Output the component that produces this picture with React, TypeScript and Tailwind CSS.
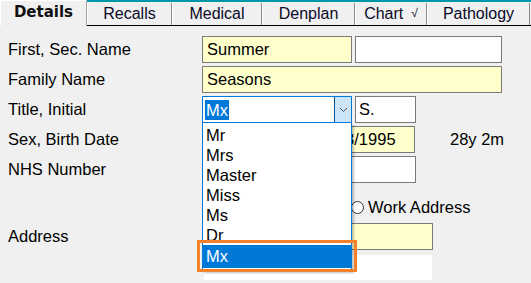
import React from "react";

const tabs = [
  { label: "Recalls", w: "w-[85px]" },
  { label: "Medical", w: "w-[90px]" },
  { label: "Denplan", w: "w-[93px]" },
  { label: "Chart", w: "w-[72px]", tick: true },
  { label: "Pathology", w: "w-[103px]" },
];

const titles = ["Mr", "Mrs", "Master", "Miss", "Ms", "Dr", "Mx"];

const Label = ({ children }: { children: string }) => (
  <div className="w-[202px] shrink-0 pl-2 text-[16.5px] text-black">{children}</div>
);

export default function App() {
  return (
    <div
      className="relative w-[531px] h-[283px] overflow-hidden bg-[#f0f0f0] text-black"
      style={{ fontFamily: '"Liberation Sans", Arial, sans-serif' }}
    >
      {/* Tabs */}
      <div className="flex h-[26px]">
        <div
          className="w-[87px] flex items-center justify-center border-t border-l border-white border-r border-r-[#a0a0a0] pb-[2px] text-[15px] font-bold text-[#111]"
          style={{ fontFamily: '"DejaVu Sans", sans-serif' }}
        >
          Details
        </div>
        <div className="flex-1 flex border-t-2 border-[#0097a7] border-b border-b-black">
          {tabs.map((t) => (
            <div
              key={t.label}
              className={`${t.w} shrink-0 flex items-center justify-center border-l border-white border-r border-r-[#8a8a8a] mt-[1px] text-[16px] text-[#0a0a28]`}
            >
              {t.label}
              {t.tick && <span className="ml-[8px] text-[12px] -mt-[2px]">√</span>}
            </div>
          ))}
        </div>
      </div>

      {/* Form */}
      <div className="flex flex-col gap-[3px] pt-[10px]">
        <div className="flex items-center h-[27px]">
          <Label>First, Sec. Name</Label>
          <div className="w-[150px] h-[27px] border border-[#7a7a7a] bg-[#ffffcc] px-[4px] flex items-center text-[16.5px]">Summer</div>
          <div className="w-[147px] h-[27px] ml-[3px] border border-[#7a7a7a] bg-white" />
        </div>

        <div className="flex items-center h-[27px]">
          <Label>Family Name</Label>
          <div className="w-[300px] h-[27px] border border-[#7a7a7a] bg-[#ffffcc] px-[4px] flex items-center text-[16.5px]">Seasons</div>
        </div>

        <div className="flex items-center h-[27px]">
          <Label>Title, Initial</Label>
          <div className="relative z-10 w-[150px] h-[27px]">
            <div className="flex h-full border border-[#0078d7] bg-white">
              <div className="flex-1 flex items-center pl-[2px]">
                <span className="bg-[#0078d7] text-white text-[16.5px] px-[1px] leading-[20px]">Mx</span>
              </div>
              <div className="w-[17px] bg-[#cce4f7] border-l border-[#005499] flex items-center justify-center">
                <svg width="9" height="6" viewBox="0 0 9 6">
                  <polyline points="1,1 4.5,4.5 8,1" fill="none" stroke="#555" strokeWidth="1" />
                </svg>
              </div>
            </div>
            {/* Open list */}
            <div className="absolute left-0 top-[27px] w-[150px] border border-t-0 border-[#0078d7] bg-white pt-[2px] pb-[2px] shadow-[2px_2px_2px_rgba(0,0,0,0.25)]">
              {titles.map((t) => (
                <div
                  key={t}
                  className={`flex items-center px-[3px] text-[16.5px] ${t === "Mx" ? "bg-[#0078d7] text-white h-[23px]" : "h-[20px] text-black"}`}
                >
                  {t}
                </div>
              ))}
            </div>
            <div className="absolute left-[-5px] top-[144px] w-[160px] h-[32px] border-[3px] border-[#f5822a]" />
          </div>
          <div className="w-[61px] h-[27px] ml-[3px] border border-[#7a7a7a] bg-white px-[3px] flex items-center text-[16.5px]">S.</div>
        </div>

        <div className="flex items-center h-[27px]">
          <Label>Sex, Birth Date</Label>
          <div className="w-[104px] h-[27px] border border-[#7a7a7a] bg-white" />
          <div className="w-[106px] h-[27px] ml-[3px] border border-[#7a7a7a] bg-[#ffffcc] px-[3px] flex items-center text-[16.5px]">13/03/1995</div>
          <div className="ml-[35px] text-[16.5px]">28y 2m</div>
        </div>

        <div className="flex items-center h-[27px]">
          <Label>NHS Number</Label>
          <div className="w-[214px] h-[27px] border border-[#7a7a7a] bg-white" />
        </div>

        <div className="flex items-center h-[34px] pt-[9px]">
          <div className="w-[351px] shrink-0" />
          <span className="w-[13px] h-[13px] rounded-full border border-[#333] bg-white" />
          <span className="ml-[4px] text-[16.5px]">Work Address</span>
        </div>

        <div className="flex items-center h-[27px]">
          <Label>Address</Label>
          <div className="w-[231px] h-[27px] border border-[#7a7a7a] bg-[#ffffcc]" />
        </div>

        <div className="ml-[204px] mt-[2px] w-[228px] h-[25px] bg-white" />
      </div>
    </div>
  );
}
